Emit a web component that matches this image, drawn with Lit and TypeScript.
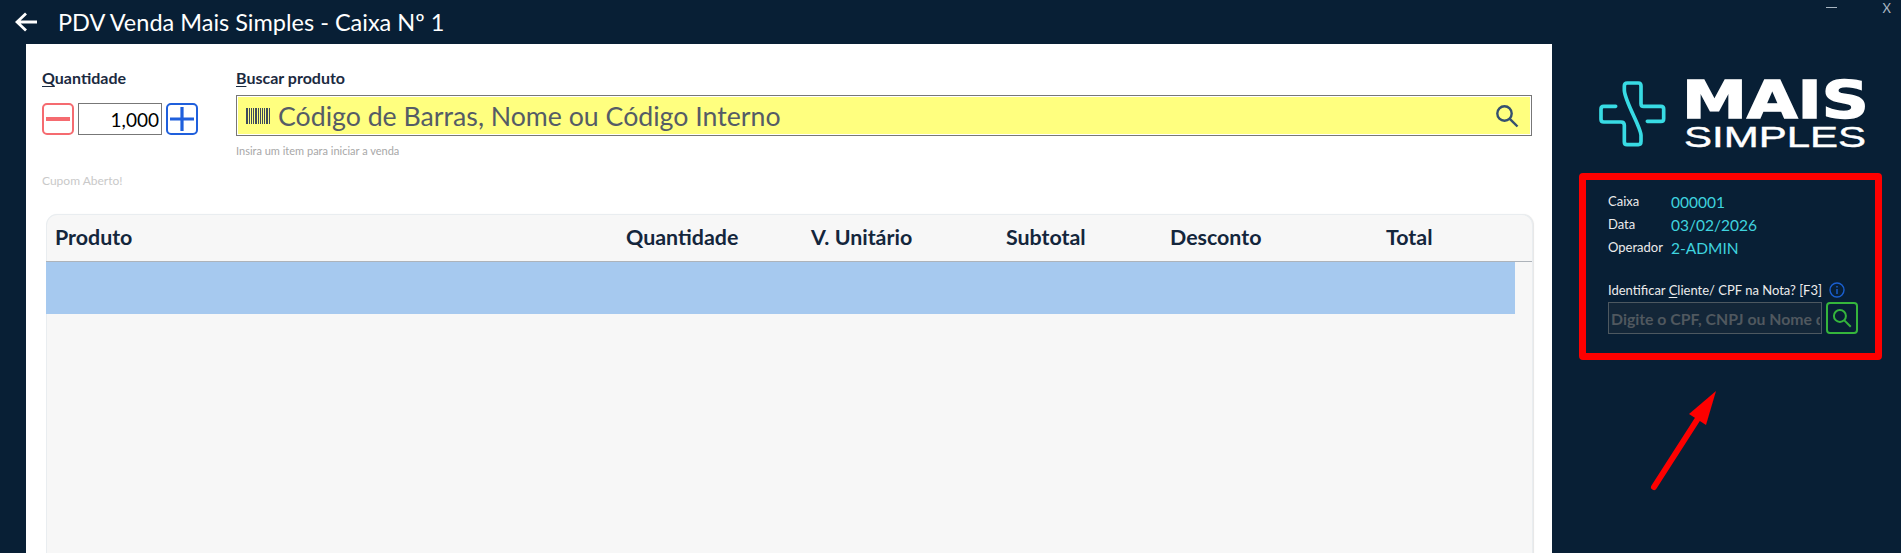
import { LitElement, html, css, svg } from "lit";
import { customElement } from "lit/decorators.js";

const columns = ["Produto", "Quantidade", "V. Unitário", "Subtotal", "Desconto", "Total"];
const info = [
  ["Caixa", "000001"],
  ["Data", "03/02/2026"],
  ["Operador", "2-ADMIN"],
];
// widths of the barcode stripes, drawn left to right
const stripes = [2, 1, 1, 1, 2, 1, 1, 1, 1, 2, 1, 1, 3];

const searchIcon = (size: number, color: string) => html`
  <svg width=${size} height=${size} viewBox="0 0 24 24" fill="none" stroke=${color} stroke-width="2.4">
    <circle cx="9.5" cy="9.5" r="7.2"></circle>
    <path d="M14.8 14.8 22.5 22.5"></path>
  </svg>
`;

const barcode = () => {
  let x = 0;
  const bars = stripes.map((w) => {
    const bar = svg`<rect x=${x} y="0" width=${w} height="16"></rect>`;
    x += w + 1;
    return bar;
  });
  return html`<svg width="24" height="16" viewBox="0 0 24 16" fill="#3d4a5c">${bars}</svg>`;
};

@customElement("app-root")
export class AppRoot extends LitElement {
  static styles = css`
    :host {
      display: block;
      position: relative;
      height: 553px;
      overflow: hidden;
      background: #081f35;
      font-family: Lato, "Open Sans", sans-serif;
    }
    .titlebar {
      display: flex;
      align-items: center;
      height: 44px;
      padding: 0 10px 0 15px;
      color: #fff;
    }
    .titlebar h1 {
      margin: 0 0 0 21px;
      font-size: 23.5px;
      font-weight: 400;
      line-height: 34px;
      flex: 1;
    }
    .win {
      display: flex;
      align-items: center;
      gap: 46px;
      margin-top: -29px;
      color: #a9b6c2;
      font-size: 13px;
    }
    .win .min {
      width: 11px;
      height: 1px;
      background: #a9b6c2;
    }
    .body {
      display: flex;
      height: 509px;
    }
    .panel {
      margin-left: 26px;
      width: 1526px;
      background: #fff;
      padding: 24px 20px 0 16px;
      box-sizing: border-box;
    }
    .controls {
      display: flex;
      height: 146px;
    }
    .qty {
      width: 194px;
      flex: none;
    }
    .search {
      flex: 1;
    }
    .label {
      font-size: 16px;
      font-weight: 700;
      color: #1b2a3f;
      line-height: 19px;
    }
    .label u {
      text-underline-offset: 2px;
    }
    .stepper {
      display: flex;
      gap: 4px;
      margin-top: 16px;
    }
    .step {
      width: 32px;
      height: 32px;
      box-sizing: border-box;
      border: 2px solid;
      border-radius: 5px;
      background: #fff;
      padding: 0;
      display: flex;
      align-items: center;
      justify-content: center;
    }
    .step.minus {
      border-color: #f56b70;
    }
    .step.plus {
      border-color: #1f5fdc;
    }
    .qty-input {
      width: 84px;
      height: 32px;
      box-sizing: border-box;
      border: 1px solid #777;
      text-align: right;
      padding: 0 2px;
      font: 400 19px Lato, sans-serif;
      color: #000;
      outline: none;
    }
    .cupom {
      margin-top: 38px;
      font-size: 12px;
      color: #c9c9c9;
    }
    .field {
      display: flex;
      align-items: center;
      gap: 8px;
      height: 41px;
      margin-top: 8px;
      box-sizing: border-box;
      border: 1px solid #777;
      box-shadow: inset 0 0 0 1px #fff;
      background: #ffff7f;
      padding: 0 12px 0 9px;
    }
    .field input {
      flex: 1;
      min-width: 0;
      border: 0;
      background: transparent;
      outline: none;
      padding: 0;
      font: 400 26.7px Lato, sans-serif;
    }
    .field input::placeholder {
      color: #555c66;
      opacity: 1;
    }
    .hint {
      margin-top: 8px;
      font-size: 11px;
      color: #a8a8a8;
    }
    .table {
      height: 400px;
      box-sizing: border-box;
      background: #f7f7f7;
      border-radius: 11px 11px 0 0;
      border: 1px solid #e9edf0;
      border-bottom: 0;
      box-shadow: 1px 0 1px #e6e6e6;
      margin-left: 4px;
      margin-right: -1px;
    }
    .thead {
      display: grid;
      grid-template-columns: 571px 185px 195px 164px 216px 1fr;
      align-items: center;
      height: 47px;
      box-sizing: border-box;
      border-bottom: 1px solid #adb3ba;
      margin-left: -1px;
      padding: 0 0 3px 9px;
      font-size: 21.4px;
      font-weight: 700;
      color: #14263c;
    }
    .row {
      height: 52px;
      margin: 0 17px 0 -1px;
      background: #a6c9ef;
    }
    .side {
      flex: 1;
      padding: 36px 19px 0 27px;
      min-width: 0;
    }
    .logo {
      display: flex;
      align-items: flex-start;
      gap: 9px;
      margin-left: 20px;
      height: 93px;
    }
    .logo svg {
      margin-top: -8px;
      margin-left: -10px;
      margin-right: -4px;
    }
    .word {
      color: #fff;
      line-height: 1;
      white-space: nowrap;
      margin-top: 2px;
    }
    .word div {
      transform-origin: left top;
    }
    .mais {
      font: 700 51px/37px "DejaVu Sans", sans-serif;
      margin-left: -2px;
      transform: scaleX(1.28);
      -webkit-text-stroke: 1.5px #fff;
    }
    .simples {
      font: 400 30px/22px "Liberation Sans", sans-serif;
      margin-top: 7px;
      transform: scaleX(1.4);
      -webkit-text-stroke: 0.4px #fff;
    }
    .box {
      height: 187px;
      box-sizing: border-box;
      border: 7px solid #fe0000;
      border-radius: 4px;
      padding: 9px 17px 0 22px;
      color: #ececec;
    }
    .meta {
      display: grid;
      grid-template-columns: 63px 1fr;
      grid-auto-rows: 23px;
      align-items: center;
      font-size: 13px;
    }
    .meta .v {
      font-size: 15.5px;
      color: #3fd3df;
      margin-top: 2px;
    }
    .who {
      display: flex;
      align-items: center;
      margin-top: 22px;
      font-size: 13px;
      height: 20px;
    }
    .who svg {
      margin-left: 7px;
    }
    .who u {
      text-underline-offset: 2px;
    }
    .lookup {
      display: flex;
      gap: 4px;
      margin-top: 2px;
    }
    .lookup input {
      width: 214px;
      flex: none;
      height: 32px;
      box-sizing: border-box;
      border: 1px solid #4d5860;
      background: #132638;
      padding: 0 1px 0 2px;
      font: 700 15.8px Lato, sans-serif;
      outline: none;
    }
    .lookup input::placeholder {
      color: #50585f;
      opacity: 1;
    }
    .lookup button {
      width: 32px;
      height: 32px;
      flex: none;
      box-sizing: border-box;
      border: 2px solid #35b53c;
      border-radius: 4px;
      background: transparent;
      padding: 0;
      display: flex;
      align-items: center;
      justify-content: center;
    }
    .callout {
      position: absolute;
      left: 1640px;
      top: 380px;
    }
  `;

  render() {
    return html`
      <div class="titlebar">
        <svg width="22" height="20" viewBox="0 0 22 20" fill="none" stroke="#fff" stroke-width="2.8">
          <path d="M22 10H2M11 1.5 2 10l9 8.5"></path>
        </svg>
        <h1>PDV Venda Mais Simples - Caixa Nº 1</h1>
        <div class="win"><span class="min"></span><span>X</span></div>
      </div>
      <div class="body">
        <main class="panel">
          <div class="controls">
            <div class="qty">
              <div class="label"><u>Q</u>uantidade</div>
              <div class="stepper">
                <button class="step minus">
                  <svg width="24" height="4"><rect width="24" height="4" fill="#f56b70"></rect></svg>
                </button>
                <input class="qty-input" value="1,000" />
                <button class="step plus">
                  <svg width="24" height="24" viewBox="0 0 24 24" stroke="#1f5fdc" stroke-width="3.2">
                    <path d="M0 12H24M12 0V24"></path>
                  </svg>
                </button>
              </div>
              <div class="cupom">Cupom Aberto!</div>
            </div>
            <div class="search">
              <div class="label"><u>B</u>uscar produto</div>
              <div class="field">
                ${barcode()}
                <input placeholder="Código de Barras, Nome ou Código Interno" />
                ${searchIcon(24, "#34506f")}
              </div>
              <div class="hint">Insira um item para iniciar a venda</div>
            </div>
          </div>
          <div class="table">
            <div class="thead">${columns.map((c) => html`<span>${c}</span>`)}</div>
            <div class="row"></div>
          </div>
        </main>
        <aside class="side">
          <div class="logo">
            <svg width="90" height="84" viewBox="0 0 270 252" fill="none" stroke="#38dbe4" stroke-width="11" stroke-linecap="round">
              <path
                d="M80 103H44Q36 103 36 111V142Q36 150 44 150H96Q106 150 106 160V210Q106 218 114 218H148Q156 218 156 208V190C156 165 108 90 106 55V42Q106 33 115 33H148Q156 33 156 42V95Q156 103 164 103H216Q224 103 224 111V140Q224 148 216 148H175"
              ></path>
            </svg>
            <div class="word">
              <div class="mais">MAIS</div>
              <div class="simples">SIMPLES</div>
            </div>
          </div>
          <section class="box">
            <div class="meta">
              ${info.map(([k, v]) => html`<span>${k}</span><span class="v">${v}</span>`)}
            </div>
            <div class="who">
              <span>Identificar <u>C</u>liente/ CPF na Nota? [F3]</span>
              <svg width="16" height="16" viewBox="0 0 16 16" fill="none" stroke="#1a5fd0" stroke-width="1.4">
                <circle cx="8" cy="8" r="7"></circle>
                <path d="M8 7V12M8 4V5.6"></path>
              </svg>
            </div>
            <div class="lookup">
              <input placeholder="Digite o CPF, CNPJ ou Nome do Cliente" />
              <button>${searchIcon(20, "#35b53c")}</button>
            </div>
          </section>
        </aside>
      </div>
      <svg class="callout" width="90" height="120" viewBox="0 0 90 120">
        <path d="M14 107 57 40" stroke="#fe0000" stroke-width="6" stroke-linecap="round"></path>
        <path d="M76 11 49 34 66 45Z" fill="#fe0000"></path>
      </svg>
    `;
  }
}
